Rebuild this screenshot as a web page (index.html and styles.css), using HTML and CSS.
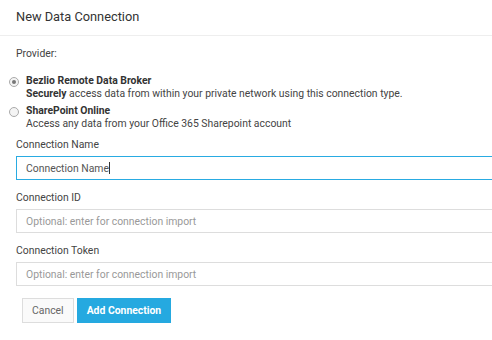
FILE: index.html
```html
<!DOCTYPE html>
<html lang="en">
<head>
  <meta charset="UTF-8">
  <meta name="viewport" content="width=device-width, initial-scale=1.0">
  <title>New Data Connection</title>
  <link rel="stylesheet" href="styles.css">
</head>
<body>
  <div class="modal-header">
    <h4 class="modal-title">New Data Connection</h4>
  </div>

  <form class="modal-body">
    <p class="provider-label">Provider:</p>

    <label class="provider">
      <span class="radio checked"></span>
      <span class="provider-text">
        <b>Bezlio Remote Data Broker</b>
        <span><b>Securely</b> access data from within your private network using this connection type.</span>
      </span>
    </label>

    <label class="provider">
      <span class="radio"></span>
      <span class="provider-text">
        <b>SharePoint Online</b>
        <span>Access any data from your Office 365 Sharepoint account</span>
      </span>
    </label>

    <div class="field">
      <label>Connection Name</label>
      <div class="input focused">Connection Name<span class="caret"></span></div>
    </div>

    <div class="field">
      <label>Connection ID</label>
      <div class="input placeholder">Optional: enter for connection import</div>
    </div>

    <div class="field">
      <label>Connection Token</label>
      <div class="input placeholder">Optional: enter for connection import</div>
    </div>

    <div class="buttons">
      <button type="button" class="btn btn-default">Cancel</button>
      <button type="button" class="btn btn-primary">Add Connection</button>
    </div>
  </form>
</body>
</html>
```

FILE: styles.css
```css
body { margin: 0; font-family: Roboto, "Liberation Sans", sans-serif; color: #444; background: #fff; overflow: hidden; }

.modal-header { height: 35px; border-bottom: 1px solid #eee; display: flex; align-items: center; padding-left: 16px; }
.modal-title { margin: 0; font-size: 12.8px; font-weight: 400; color: #333; padding-bottom: 3px; }

.modal-body { padding: 10px 0 0 16px; width: 520px; }
.provider-label { margin: 0 0 12px; font-size: 10.4px; line-height: 16px; }

.provider { display: flex; align-items: flex-start; margin-left: -7px; margin-bottom: 4px; font-size: 10.4px; line-height: 13px; }
.provider-text { display: flex; flex-direction: column; }
.provider-text b { font-weight: 700; color: #333; }
.radio { width: 8px; height: 8px; border: 1px solid #aaa; border-radius: 50%; background: #f4f4f4; margin: 3px 7px 0 0; flex: none; display: flex; align-items: center; justify-content: center; }
.radio.checked::after { content: ""; width: 4px; height: 4px; border-radius: 50%; background: #777; }

.field { margin-top: 8px; }
.field label { display: block; font-size: 10.4px; line-height: 14px; margin-bottom: 4px; }
.field + .field { margin-top: 11px; }
.input { height: 22px; border: 1px solid #ddd; padding: 0 9px; display: flex; align-items: center; font-size: 10.4px; color: #555; }
.input.focused { border-color: #29abe2; }
.input.placeholder { color: #999; }
.caret { width: 1px; height: 12px; background: #333; }

.buttons { display: flex; gap: 3px; margin: 12px 0 0 6px; }
.btn { height: 25px; font-family: inherit; font-size: 10.4px; border-radius: 0; padding: 0 9px; cursor: pointer; }
.btn-default { background: #fafafa; border: 1px solid #ddd; color: #666; }
.btn-primary { background: #25a9e0; border: 1px solid #25a9e0; color: #fff; font-weight: 700; }
```
